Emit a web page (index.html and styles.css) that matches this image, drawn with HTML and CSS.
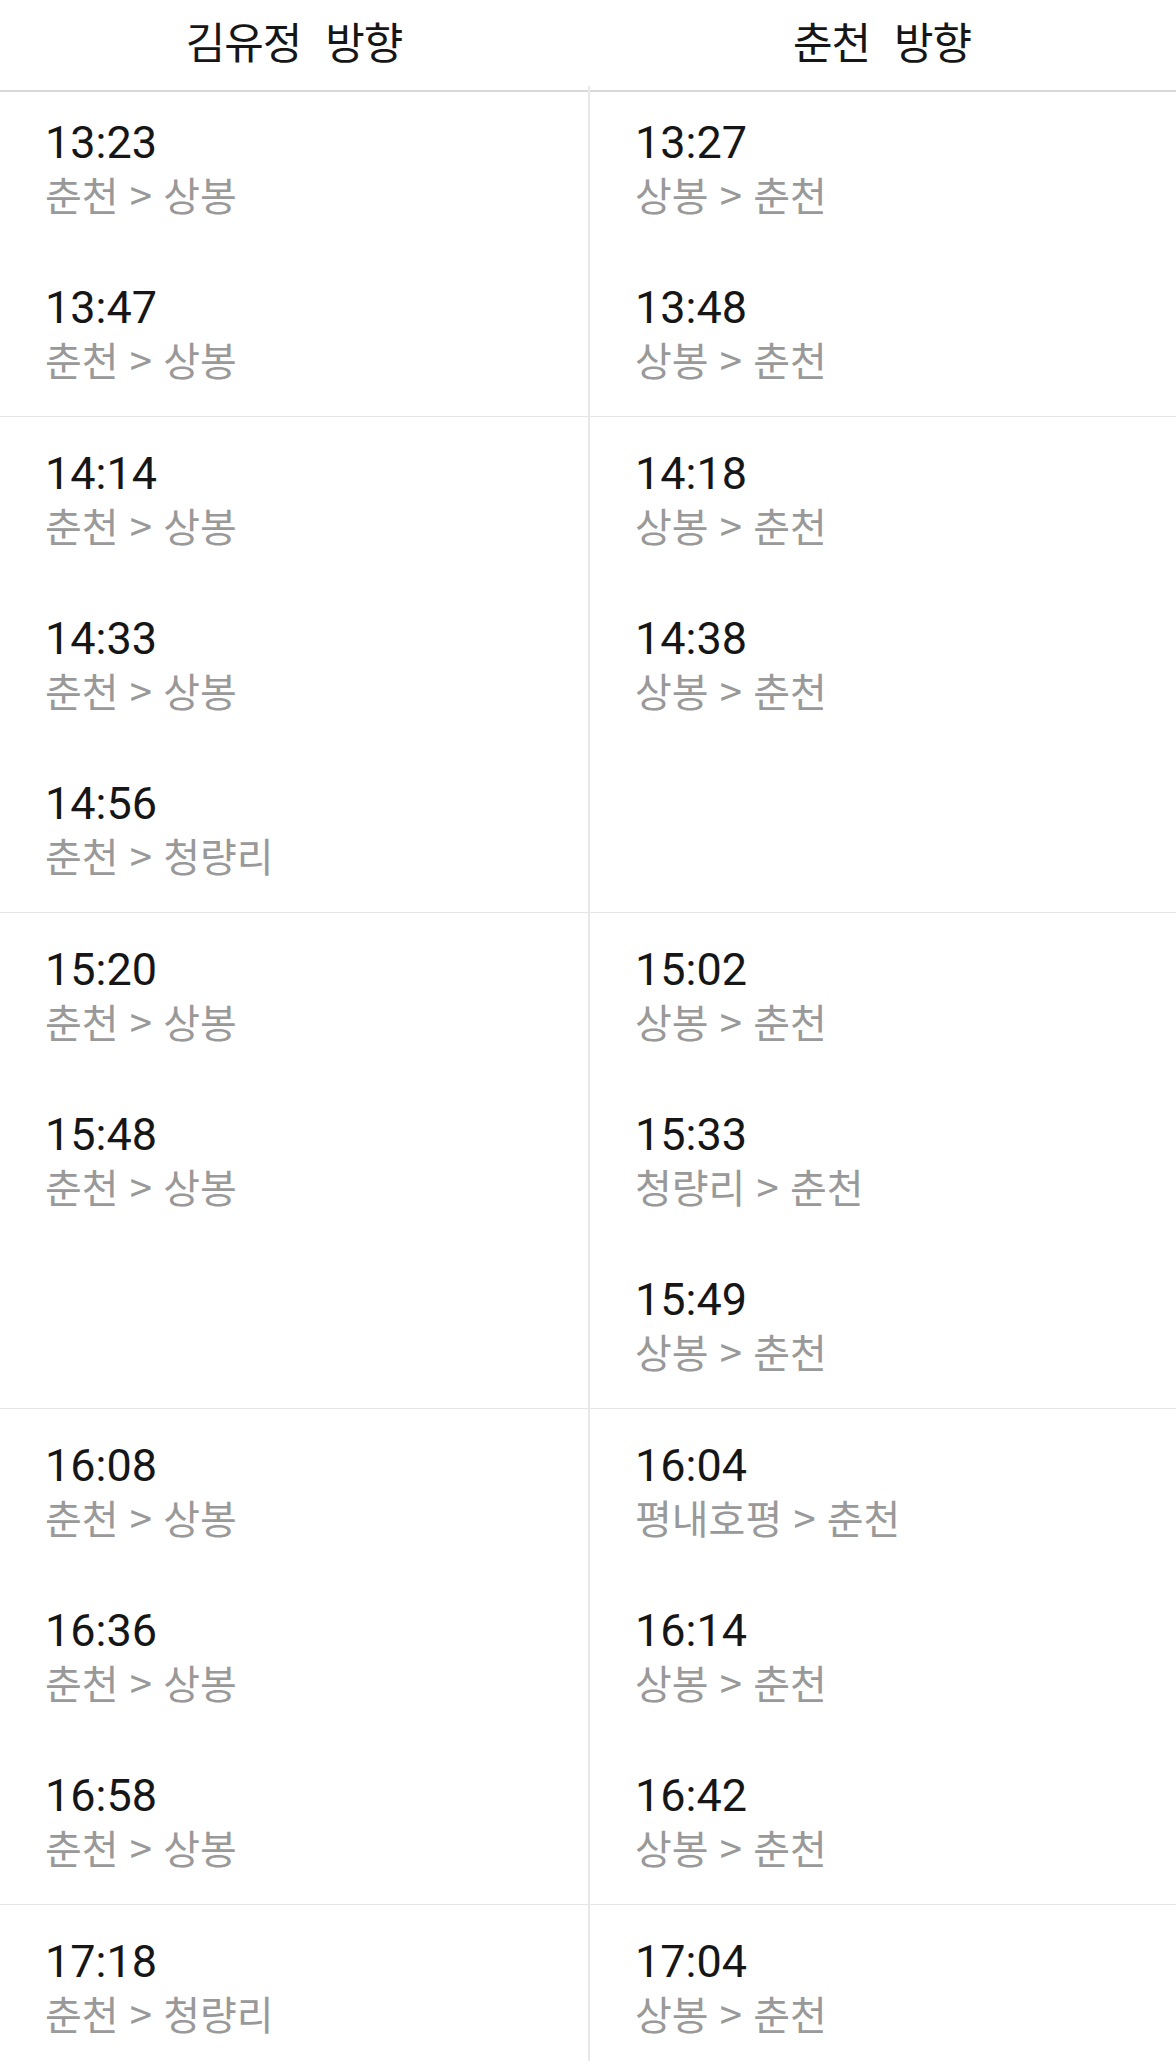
FILE: index.html
```html
<!DOCTYPE html>
<html lang="ko">
<head>
  <meta charset="UTF-8">
  <meta name="viewport" content="width=device-width, initial-scale=1.0">
  <title>시간표</title>
  <link rel="stylesheet" href="styles.css">
</head>
<body>
  <header class="head">
    <div>김유정 방향</div>
    <div>춘천 방향</div>
  </header>
  <main class="list">
    <section class="hour">
      <div class="col">
        <div class="train"><div class="time">13:23</div><div class="route">춘천 &gt; 상봉</div></div>
        <div class="train"><div class="time">13:47</div><div class="route">춘천 &gt; 상봉</div></div>
      </div>
      <div class="col">
        <div class="train"><div class="time">13:27</div><div class="route">상봉 &gt; 춘천</div></div>
        <div class="train"><div class="time">13:48</div><div class="route">상봉 &gt; 춘천</div></div>
      </div>
    </section>
    <section class="hour">
      <div class="col">
        <div class="train"><div class="time">14:14</div><div class="route">춘천 &gt; 상봉</div></div>
        <div class="train"><div class="time">14:33</div><div class="route">춘천 &gt; 상봉</div></div>
        <div class="train"><div class="time">14:56</div><div class="route">춘천 &gt; 청량리</div></div>
      </div>
      <div class="col">
        <div class="train"><div class="time">14:18</div><div class="route">상봉 &gt; 춘천</div></div>
        <div class="train"><div class="time">14:38</div><div class="route">상봉 &gt; 춘천</div></div>
      </div>
    </section>
    <section class="hour">
      <div class="col">
        <div class="train"><div class="time">15:20</div><div class="route">춘천 &gt; 상봉</div></div>
        <div class="train"><div class="time">15:48</div><div class="route">춘천 &gt; 상봉</div></div>
      </div>
      <div class="col">
        <div class="train"><div class="time">15:02</div><div class="route">상봉 &gt; 춘천</div></div>
        <div class="train"><div class="time">15:33</div><div class="route">청량리 &gt; 춘천</div></div>
        <div class="train"><div class="time">15:49</div><div class="route">상봉 &gt; 춘천</div></div>
      </div>
    </section>
    <section class="hour">
      <div class="col">
        <div class="train"><div class="time">16:08</div><div class="route">춘천 &gt; 상봉</div></div>
        <div class="train"><div class="time">16:36</div><div class="route">춘천 &gt; 상봉</div></div>
        <div class="train"><div class="time">16:58</div><div class="route">춘천 &gt; 상봉</div></div>
      </div>
      <div class="col">
        <div class="train"><div class="time">16:04</div><div class="route">평내호평 &gt; 춘천</div></div>
        <div class="train"><div class="time">16:14</div><div class="route">상봉 &gt; 춘천</div></div>
        <div class="train"><div class="time">16:42</div><div class="route">상봉 &gt; 춘천</div></div>
      </div>
    </section>
    <section class="hour">
      <div class="col">
        <div class="train"><div class="time">17:18</div><div class="route">춘천 &gt; 청량리</div></div>
      </div>
      <div class="col">
        <div class="train"><div class="time">17:04</div><div class="route">상봉 &gt; 춘천</div></div>
      </div>
    </section>
  </main>
</body>
</html>
```

FILE: styles.css
```css
* { box-sizing: border-box; margin: 0; padding: 0; }
body { font-family: Roboto, "Noto Sans CJK KR", sans-serif; background: #fff; color: #161616; overflow: hidden; }

.head { display: grid; grid-template-columns: 588px 1fr; height: 92px; border-bottom: 2px solid #d9d9d9; }
.head div { text-align: center; font-family: "Noto Sans CJK KR", sans-serif; font-size: 43px; line-height: 80px; word-spacing: 0.3em; letter-spacing: -1px; }

.list { margin-top: -6px; }
.hour { display: grid; grid-template-columns: 588px 1fr; border-bottom: 1px solid #e6e6e6; }
.col + .col { border-left: 2px solid #e8e8e8; }
.train { height: 165px; padding: 30px 45px 0; }
.time { font-size: 45px; line-height: 54px; }
.route { font-family: "Noto Sans CJK KR", sans-serif; font-size: 40px; line-height: 48px; color: #999; }
```
